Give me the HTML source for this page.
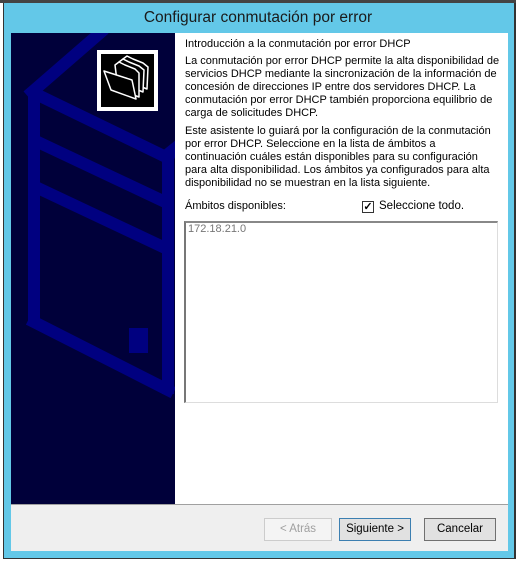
<!DOCTYPE html>
<html><head><meta charset="utf-8"><style>
*{margin:0;padding:0;box-sizing:border-box}
body{width:516px;height:561px;background:#fff;position:relative;overflow:hidden;font-family:"Liberation Sans",sans-serif;font-size:11.5px;color:#000}
.abs{position:absolute}
.btn{position:absolute;top:518px;height:23px;border:1px solid #adadad;background:#e1e1e1;text-align:center;line-height:21px;font-size:11.5px}
p{position:absolute;left:185px;width:330px;line-height:13px;font-size:11px;white-space:nowrap}
</style></head><body>
<div class="abs" style="left:0;top:0;width:516px;height:3px;background:#444"></div>
<div class="abs" style="left:3px;top:3px;width:513px;height:556px;background:#63c8e8;border-left:1px solid #333;border-right:2px solid #333;border-bottom:1px solid #333"></div>
<div class="abs" style="left:0;top:3px;width:516px;height:30px;text-align:center;line-height:30px;font-size:15.5px;color:#1a1a1a">Configurar conmutación por error</div>
<div class="abs" style="left:11px;top:33px;width:497px;height:471px;background:#fff"></div>
<div class="abs" style="left:11px;top:504px;width:497px;height:47px;background:#efefef;border-top:1px solid #a0a0a0"></div>
<svg class="abs" style="left:11px;top:33px" width="164" height="471" viewBox="11 33 164 471">
<rect x="11" y="33" width="164" height="471" fill="#00003a"/>
<g stroke="#000080" stroke-width="12" fill="none" stroke-linecap="square">
<line x1="34" y1="94" x2="34" y2="318"/>
<line x1="32" y1="92" x2="100" y2="33"/>
<line x1="40" y1="96" x2="168" y2="158"/>
<line x1="168" y1="160" x2="168" y2="388"/>
<line x1="34" y1="322" x2="168" y2="390"/>
<line x1="40" y1="143" x2="163" y2="201"/>
<line x1="40" y1="189" x2="163" y2="247"/>
<line x1="168" y1="154" x2="178" y2="146"/>
</g>
<rect x="129" y="328" width="19" height="25" fill="#000080"/>
<rect x="99" y="52" width="57" height="57" fill="#000" stroke="#fff" stroke-width="4"/>
<g stroke="#fff" stroke-width="1.5" fill="#000" stroke-linejoin="round">
<path d="M123 59 l4 -3 l6 3 l10 4 l5 4 l-1 22 l-5 -2 z"/>
<path d="M119 62 l4 -3 l6 3 l10 4 l5 4 l-1 22 l-5 -2 z"/>
<path d="M115 65 l4 -3 l6 3 l10 4 l4 4 l0 24 l-21 -8 z"/>
<path d="M104 71 l28 9 l4 19 l-25 -9 z"/>
</g>
</svg>
<p style="top:38px">Introducción a la conmutación por error DHCP</p>
<p style="top:55px">La conmutación por error DHCP permite la alta disponibilidad de<br>servicios DHCP mediante la sincronización de la información de<br>concesión de direcciones IP entre dos servidores DHCP. La<br>conmutación por error DHCP también proporciona equilibrio de<br>carga de solicitudes DHCP.</p>
<p style="top:125px">Este asistente lo guiará por la configuración de la conmutación<br>por error DHCP. Seleccione en la lista de ámbitos a<br>continuación cuáles están disponibles para su configuración<br>para alta disponibilidad. Los ámbitos ya configurados para alta<br>disponibilidad no se muestran en la lista siguiente.</p>
<p style="top:200px">Ámbitos disponibles:</p>
<div class="abs" style="left:362px;top:201px;width:12px;height:12px;border:1px solid #333;background:#fff;font-size:11px;line-height:10px;text-align:center;font-weight:bold">✓</div>
<div class="abs" style="left:379px;top:200px;font-size:11.5px;line-height:13px">Seleccione todo.</div>
<div class="abs" style="left:184px;top:221px;width:314px;height:182px;border:1px solid #ddd;border-left:2px solid #777;border-top:2px solid #888;background:#fff"></div>
<div class="abs" style="left:188px;top:223px;color:#777;font-size:11px">172.18.21.0</div>
<div class="btn" style="left:264px;width:68px;color:#a0a0a0;background:#f4f4f4;border-color:#ccc">&lt; Atrás</div>
<div class="btn" style="left:339px;width:72px;border-color:#3c7fb1">Siguiente &gt;</div>
<div class="btn" style="left:424px;width:72px;border-color:#707070">Cancelar</div>
</body></html>
